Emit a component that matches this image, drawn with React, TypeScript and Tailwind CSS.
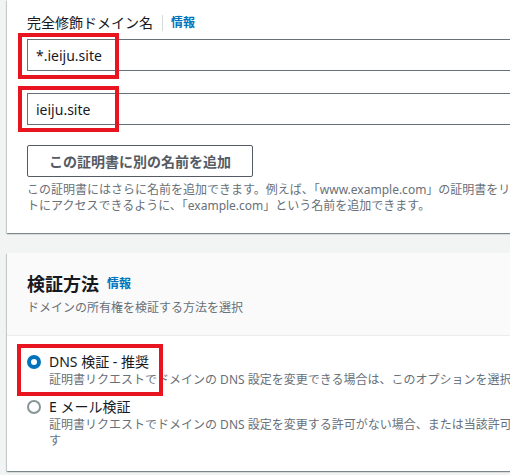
import React from "react";

const font = { fontFamily: '"Noto Sans", "Noto Sans CJK JP", sans-serif' };

function RedBox({ className }: { className: string }) {
  return <div className={`absolute border-[4px] border-[#e8141f] pointer-events-none ${className}`} />;
}

export default function App() {
  return (
    <div className="relative w-[510px] h-[475px] overflow-hidden bg-[#f2f3f3] text-[#16191f]" style={font}>
      <div className="absolute left-0 top-0 w-[510px] h-[475px] pointer-events-none z-10">
        <RedBox className="left-[18px] top-[33px] w-[101px] h-[46px]" />
        <RedBox className="left-[18px] top-[86px] w-[101px] h-[46px]" />
        <RedBox className="left-[17px] top-[344px] w-[146px] h-[52px]" />
      </div>

      <div className="flex flex-col gap-[20px] pl-[7px] w-[800px]">
        {/* Card 1 */}
        <div className="bg-white h-[233px] pt-[14px] px-[20px] shadow-[0_1px_1px_0_rgba(0,28,36,0.3),1px_1px_1px_0_rgba(0,28,36,0.15),-1px_1px_1px_0_rgba(0,28,36,0.15)]">
          <div className="flex items-center h-[18px] text-[14px] leading-[18px]">
            <span>完全修飾ドメイン名</span>
            <span className="ml-[9px] pl-[8px] border-l border-[#d5dbdb] text-[12px] font-bold text-[#0073bb] leading-[16px]">情報</span>
          </div>
          <div className="mt-[7px] h-[32px] border border-[#687078] flex items-center pl-[8px] text-[14px]">*.ieiju.site</div>
          <div className="mt-[22px] h-[32px] border border-[#687078] flex items-center pl-[8px] text-[14px]">ieiju.site</div>
          <div className="mt-[20px] w-[226px] h-[32px] border border-[#545b64] rounded-[2px] flex items-center justify-center text-[14px] font-bold text-[#545b64]">
            この証明書に別の名前を追加
          </div>
          <div className="mt-[5px] text-[12px] leading-[16px] text-[#687078] whitespace-nowrap">
            <div>この証明書にはさらに名前を追加できます。例えば、「www.example.com」の証明書をリクエストする場合、お客様がいずれかの名前でサイ</div>
            <div>トにアクセスできるように、「example.com」という名前を追加できます。</div>
          </div>
        </div>

        {/* Card 2 */}
        <div className="bg-white h-[218px] shadow-[0_1px_1px_0_rgba(0,28,36,0.3),1px_1px_1px_0_rgba(0,28,36,0.15),-1px_1px_1px_0_rgba(0,28,36,0.15)]">
          <div className="bg-[#fafafa] border-b border-[#eaeded] h-[83px] pt-[20px] px-[20px]">
            <div className="flex items-center h-[22px]">
              <span className="text-[18px] leading-[22px] font-bold">検証方法</span>
              <span className="ml-[8px] text-[12px] font-bold text-[#0073bb] leading-[16px]">情報</span>
            </div>
            <div className="mt-[5px] text-[12px] leading-[16px] text-[#687078]">ドメインの所有権を検証する方法を選択</div>
          </div>
          <div className="pt-[16px] px-[20px]">
            <div className="flex items-start gap-[8px]">
              <div className="mt-[3px] w-[14px] h-[14px] rounded-full border-[4px] border-[#0073bb] bg-white shrink-0" />
              <div>
                <div className="text-[14px] leading-[20px]">DNS 検証 - 推奨</div>
                <div className="text-[12px] leading-[16px] text-[#687078] whitespace-nowrap">証明書リクエストでドメインの DNS 設定を変更できる場合は、このオプションを選択します。</div>
              </div>
            </div>
            <div className="mt-[9px] flex items-start gap-[8px]">
              <div className="mt-[3px] w-[14px] h-[14px] rounded-full border-[2px] border-[#879596] bg-white shrink-0" />
              <div>
                <div className="text-[14px] leading-[20px]">E メール検証</div>
                <div className="text-[12px] leading-[16px] text-[#687078] whitespace-nowrap">
                  <div>証明書リクエストでドメインの DNS 設定を変更する許可がない場合、または当該許可を取得できない場合は、このオプションを選択しま</div>
                  <div>す</div>
                </div>
              </div>
            </div>
          </div>
        </div>
      </div>
    </div>
  );
}
